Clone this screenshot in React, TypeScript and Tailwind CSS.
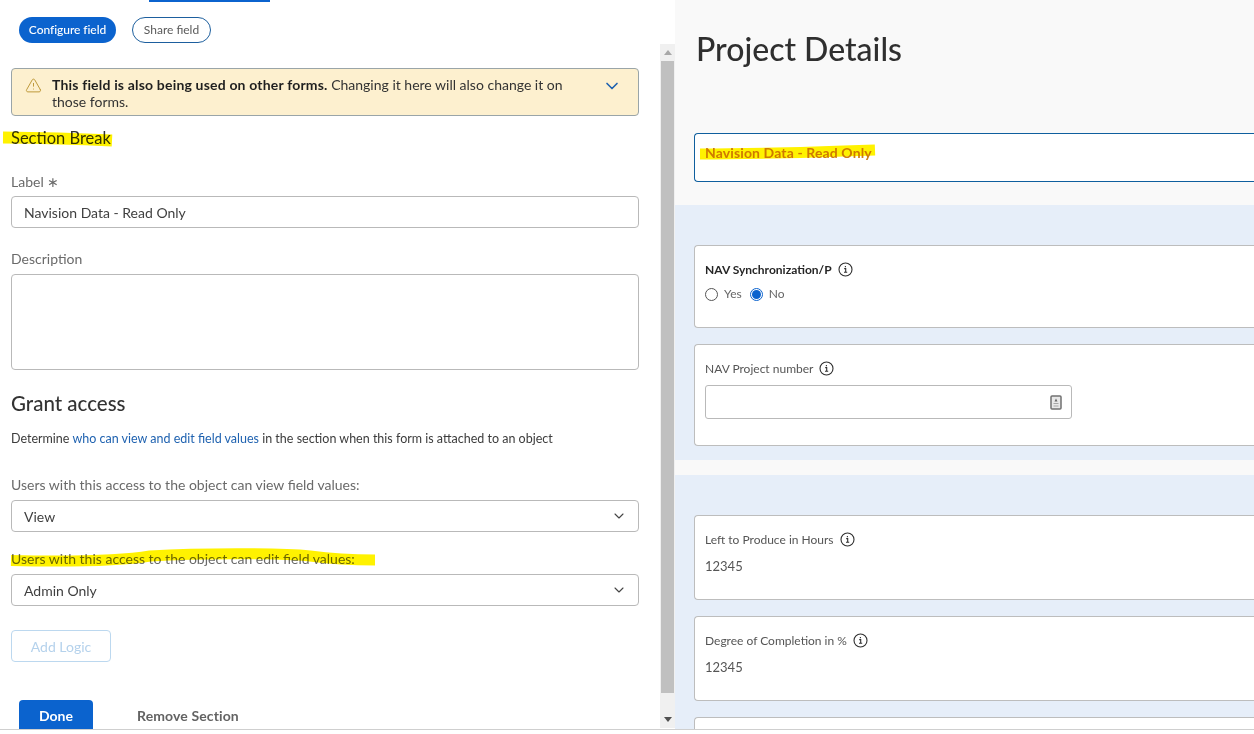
import React from "react";
import { ChevronDown, TriangleAlert } from "lucide-react";

const font = { fontFamily: '"Lato", "Open Sans", sans-serif' };

function Info() {
  return (
    <svg width="15" height="15" viewBox="0 0 15 15" className="ml-[6px] shrink-0" fill="none">
      <circle cx="7.5" cy="7.5" r="6.5" stroke="#2f2f2f" strokeWidth="1.1" />
      <path d="M6.2 6.6h1.5v3.6M6 10.3h3.2M7.4 4.1v1.1" stroke="#2f2f2f" strokeWidth="1.1" />
    </svg>
  );
}

function Select({ value }: { value: string }) {
  return (
    <div className="flex h-8 w-[628px] items-center justify-between rounded-[4px] border border-[#b9b9b9] bg-white pl-3 pr-[11px] text-[14px] text-[#3f3f3f]">
      <span>{value}</span>
      <ChevronDown size={16} color="#444" strokeWidth={1.6} />
    </div>
  );
}

function Card({ className, children }: { className: string; children: React.ReactNode }) {
  return (
    <div className={`w-[600px] shrink-0 rounded-l-[4px] border border-r-0 border-[#bdbdbd] bg-white pl-[10px] ${className}`}>
      {children}
    </div>
  );
}

function FieldLabel({ text, bold }: { text: string; bold?: boolean }) {
  return (
    <div className={`flex items-center text-[12px] leading-[15px] ${bold ? "font-bold text-[#262626]" : "text-[#555]"}`}>
      {text}
      <Info />
    </div>
  );
}

function Marker({ d, width, left, height, strokeWidth }: { d: string; width: number; left: string; height: number; strokeWidth: number }) {
  return (
    <svg
      width={width}
      height={height}
      viewBox={`0 0 ${width} ${height}`}
      fill="none"
      className={`pointer-events-none absolute top-0 overflow-visible mix-blend-multiply ${left}`}
    >
      <path d={d} stroke="#fff200" strokeWidth={strokeWidth} />
    </svg>
  );
}

function Scrollbar() {
  return (
    <div className="flex h-[684px] w-[15px] shrink-0 flex-col items-center bg-[#f0f0f0]">
      <div className="flex h-[17px] items-center justify-center">
        <div className="h-0 w-0 border-x-[4px] border-b-[5px] border-x-transparent border-b-[#a8a8a8]" />
      </div>
      <div className="h-[632px] w-[13px] bg-[#c0c0c0]" />
      <div className="flex flex-1 flex-col justify-end">
        <div className="flex h-[17px] items-center justify-center">
          <div className="h-0 w-0 border-x-[4px] border-t-[5px] border-x-transparent border-t-[#505050]" />
        </div>
      </div>
    </div>
  );
}

export default function App() {
  return (
    <div style={font} className="flex h-[734px] w-[1254px] flex-col overflow-hidden bg-white">
      <div className="flex h-[729px] shrink-0 overflow-hidden">
        {/* Left panel */}
        <div className="flex w-[675px] shrink-0 bg-white">
          <div className="w-[660px] shrink-0 pl-[11px]">
            <div className="ml-[138px] h-[2px] w-[121px] bg-[#0b63ce]" />
            <div className="mt-[15px] flex gap-[16px] pl-2">
              <div className="flex h-[26px] w-[97px] items-center justify-center rounded-full bg-[#0b63ce] text-[12px] font-medium tracking-[-0.05px] text-white">Configure field</div>
              <div className="flex h-[26px] w-[79px] items-center justify-center rounded-full border border-[#1d5f9e] text-[12px] text-[#5a5a5a]">Share field</div>
            </div>
            <div className="mt-[25px] flex h-[48px] w-[628px] rounded-[4px] border border-[#9aa5a8] bg-[#fdf0cf] pl-[13px] pt-[7px]">
              <TriangleAlert size={17} color="#b8912e" strokeWidth={1.3} className="mt-[1px] shrink-0" />
              <p className="ml-[10px] w-[530px] text-[14px] leading-[17px] text-[#333]">
                <b className="tracking-[0.18px] text-[#1f1f1f]">This field is also being used on other forms.</b> Changing it here will also change it on those forms.
              </p>
              <ChevronDown size={20} color="#1f62b0" strokeWidth={2} className="ml-[20px] shrink-0" />
            </div>
            <div className="relative mt-[12px] h-[20px] w-fit text-[16.5px] leading-[20px] text-[#333]">
              Section Break
              <Marker left="-left-[11px]" width={125} height={20} strokeWidth={12} d="M3 9.5Q60 10 112 12.5" />
            </div>
            <div className="mt-[25px] text-[14px] leading-[18px] text-[#6a6a6a]">Label ∗</div>
            <div className="mt-[5px] flex h-8 w-[628px] items-center rounded-[4px] border border-[#b9b9b9] pl-3 text-[14px] text-[#3f3f3f]">Navision Data - Read Only</div>
            <div className="mt-[22px] text-[14px] leading-[18px] text-[#6a6a6a]">Description</div>
            <div className="mt-[6px] h-[96px] w-[628px] rounded-[4px] border border-[#b9b9b9]" />
            <div className="mt-[21px] text-[20.5px] font-medium leading-[24px] text-[#333]">Grant access</div>
            <div className="mt-[16px] text-[12.5px] leading-[16px] text-[#3c3c3c]">
              Determine <span className="text-[#1f62b0]">who can view and edit field values</span> in the section when this form is attached to an object
            </div>
            <div className="mt-[29px] text-[14px] leading-[18px] text-[#6a6a6a]">Users with this access to the object can view field values:</div>
            <div className="mt-[6px]"><Select value="View" /></div>
            <div className="relative mt-[18px] h-[18px] w-fit text-[14px] leading-[18px] text-[#6a6a6a]">
              Users with this access to the object can edit field values:
              <Marker left="left-0" width={364} height={18} strokeWidth={11} d="M0 10.5C69 12 109 11 139 6C189 3 269 3 299 6C329 10 349 10 364 10" />
            </div>
            <div className="mt-[6px]"><Select value="Admin Only" /></div>
            <div className="mt-6 flex h-8 w-[100px] items-center justify-center rounded-[4px] border border-[#bcd8ef] text-[14px] text-[#b5d2ec]">Add Logic</div>
            <div className="mt-[38px] flex items-center pl-2">
              <div className="flex h-[30px] w-[74px] items-center justify-center rounded-t-[4px] bg-[#0b63ce] text-[14px] font-bold text-white">Done</div>
              <div className="ml-[44px] text-[14px] font-bold tracking-[0.12px] text-[#636363]">Remove Section</div>
            </div>
          </div>
          <div className="pt-[44px]"><Scrollbar /></div>
        </div>

        {/* Right panel */}
        <div className="flex min-w-0 flex-1 flex-col overflow-hidden bg-[#f9f9f9]">
          <h1 className="ml-[21px] mt-[29px] text-[32px] font-medium leading-[40px] text-[#2f2f2f]">Project Details</h1>
          <div className="ml-[19px] mt-[64px] h-[49px] w-[600px] shrink-0 rounded-l-[4px] border border-r-0 border-[#0f5f9e] bg-white pl-[10px] pt-[11px]">
            <div className="relative h-[16px] w-fit text-[14px] font-bold leading-[16px] tracking-[0.12px] text-[#cf7f10]">
              Navision Data - Read Only
              <Marker left="-left-[5px]" width={175} height={16} strokeWidth={11} d="M0 9C60 9 120 7 175 5" />
            </div>
          </div>
          <div className="mt-[23px] flex h-[255px] shrink-0 flex-col gap-[16px] bg-[#e6eef9] pl-[19px] pt-[40px]">
            <Card className="h-[83px] pt-[16px]">
              <FieldLabel text="NAV Synchronization/P" bold />
              <div className="mt-[8px] flex h-[18px] items-center text-[12px] text-[#666]">
                <span className="h-[13px] w-[13px] rounded-full border border-[#555]" />
                <span className="ml-[6px]">Yes</span>
                <span className="ml-2 flex h-[13px] w-[13px] items-center justify-center rounded-full border border-[#0b63ce]">
                  <span className="h-[9px] w-[9px] rounded-full bg-[#0b63ce]" />
                </span>
                <span className="ml-[6px]">No</span>
              </div>
            </Card>
            <Card className="h-[102px] pt-[16px]">
              <FieldLabel text="NAV Project number" />
              <div className="mt-[9px] flex h-[34px] w-[367px] items-center justify-end rounded-[3px] border border-[#b9b9b9] pr-[9px]">
                <svg width="12" height="15" viewBox="0 0 12 15" fill="none">
                  <rect x="1" y="1" width="10" height="13" rx="1" fill="#e8e8e8" stroke="#707070" strokeWidth="1.5" />
                  <path d="M6 3.5l1.5 3h-3z" fill="#666" />
                  <path d="M3.5 8.5h5M3.5 11h5" stroke="#a5a5a5" strokeWidth="1.2" />
                </svg>
              </div>
            </Card>
          </div>
          <div className="mt-[15px] flex flex-1 flex-col gap-[16px] bg-[#e6eef9] pl-[19px] pt-[40px]">
            <Card className="h-[85px] pt-[16px]">
              <FieldLabel text="Left to Produce in Hours" />
              <div className="mt-[10px] text-[13px] leading-[18px] text-[#555]">12345</div>
            </Card>
            <Card className="h-[85px] pt-[16px]">
              <FieldLabel text="Degree of Completion in %" />
              <div className="mt-[10px] text-[13px] leading-[18px] text-[#555]">12345</div>
            </Card>
            <Card className="h-[40px]"><span /></Card>
          </div>
        </div>
      </div>
      <div className="h-[5px] shrink-0 border-t border-[#cfcfcf] bg-white" />
    </div>
  );
}
